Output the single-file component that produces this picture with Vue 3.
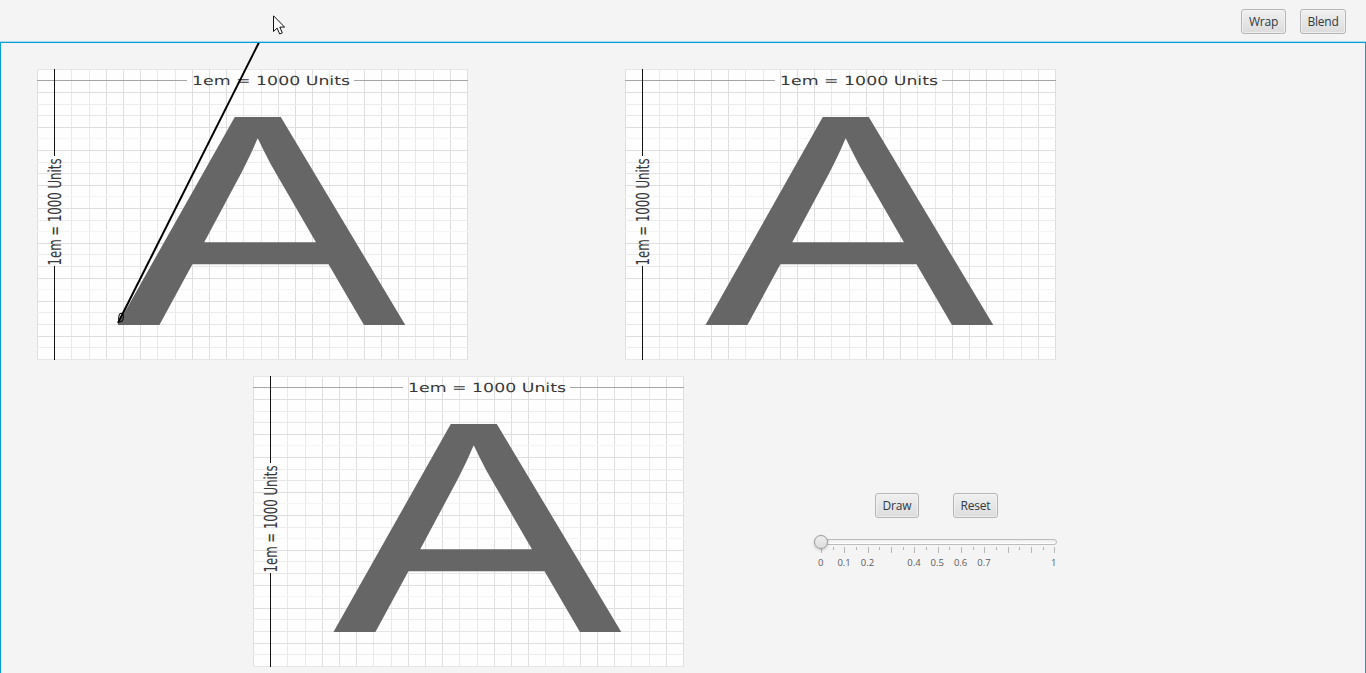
<script setup>
const cols = Array.from({ length: 26 }, (_, i) => i)
const inner = cols.filter(i => i !== 1)
const ticks = Array.from({ length: 21 }, (_, i) => i)
const labels = [0, 0.1, 0.2, 0.4, 0.5, 0.6, 0.7, 1]
const rows = [['a', 'b'], ['c']]
const weights = 'm-sfmswsfmswsfwsfmswsfmsfm'
const shades = { s: '#dedede', m: '#e6e6e6', f: '#ececec', w: '#f4f4f4' }
const vx = i => Math.round(i * 17.2)
const hy = i => Math.round(i * 11.6 - 0.2)
const vShade = i => (i % 5 === 2 || i % 5 === 3 ? '#e9e9e9' : '#dfdfdf')
const hShade = i => shades[weights[i]]
</script>

<template>
  <div class="window">
    <header class="toolbar">
      <button class="btn wrap">Wrap</button>
      <button class="btn blend">Blend</button>
    </header>
    <main class="stage">
      <div v-for="(row, r) in rows" :key="r" class="row" :class="'row' + r">
        <svg v-for="p in row" :key="p" class="sheet" width="431" height="291" viewBox="0 0 431 291">
          <rect width="431" height="291" fill="#fefefe" />
          <g shape-rendering="crispEdges">
            <rect v-for="i in inner" :key="'v' + i" :x="vx(i)" y="0" width="1" height="291" :fill="vShade(i)" />
            <rect v-for="i in inner" :key="'h' + i" x="0" :y="hy(i)" width="431" height="1" :fill="hShade(i)" />
            <rect x="0" y="11" width="150" height="1" fill="#a5a5a5" />
            <rect x="317" y="11" width="114" height="1" fill="#a5a5a5" />
            <rect x="17" y="0" width="1" height="87" fill="#111" />
            <rect x="17" y="197" width="1" height="94" fill="#111" />
          </g>
          <text class="unit" x="155" y="16" font-size="12.6" textLength="158" lengthAdjust="spacingAndGlyphs">1em = 1000 Units</text>
          <text class="unit" transform="translate(24 196.500) rotate(-90)" font-size="18" textLength="107" lengthAdjust="spacingAndGlyphs">1em = 1000 Units</text>
          <text class="letter" transform="matrix(1.447 0 .022 1.008 79.600 256)" font-size="300">A</text>
        </svg>
        <section v-if="r === 1" class="controls">
          <div class="actions">
            <button class="btn draw">Draw</button>
            <button class="btn reset">Reset</button>
          </div>
          <div class="slider">
            <div class="track"></div>
            <div class="thumb"></div>
            <svg class="scale" width="260" height="32" viewBox="0 0 260 32">
              <rect v-for="t in ticks" :key="t" :x="Math.round(11 + t * 11.67)" y="1" width="1" :height="t % 2 ? 3 : 6" fill="#b6b6b6" />
              <text v-for="l in labels" :key="l" :x="10.800 + l * 233" y="20" text-anchor="middle">{{ l }}</text>
            </svg>
          </div>
        </section>
      </div>
      <svg class="stroke" width="420" height="330" viewBox="0 43 420 330">
        <path d="M259.200 42L118 323" stroke="#000" stroke-width="2" fill="none" />
        <ellipse cx="121" cy="317.500" rx="2.300" ry="4.200" transform="rotate(8 121 317.500)" fill="none" stroke="#000" stroke-width="1" />
      </svg>
    </main>
    <svg class="cursor" width="14" height="21" viewBox="0 0 14 21">
      <path d="M.5 .8V16.500L4.100 13.100L6.700 19L9.300 17.900L6.800 12.100H11.600Z" fill="#fff" stroke="#111" stroke-width="1" />
    </svg>
  </div>
</template>

<style>
body { background: #f4f4f4; overflow: hidden; }
</style>
<style scoped>
.window { position: relative; height: 673px; overflow: hidden; background: #f4f4f4; display: flex; flex-direction: column; font-family: "Open Sans", "Noto Sans", sans-serif; }
.toolbar { flex: none; height: 42px; box-sizing: border-box; padding: 9px 20px 0 0; display: flex; justify-content: flex-end; gap: 14px; }
.btn { box-sizing: border-box; height: 25px; padding: 0; border: 1px solid #b5b5b5; border-radius: 3px; background: linear-gradient(#f0f0f0, #dcdcdc); box-shadow: inset 0 0 0 1px #f6f6f6aa; color: #2f3a44; font: 12px/23px "Open Sans", "Noto Sans", sans-serif; letter-spacing: -.2px; }
.wrap { width: 45px; }
.blend { width: 46px; }
.stage { position: relative; flex: 1; box-sizing: border-box; border: 1px solid #039ed3; border-bottom: 0; padding: 26px 0 0 36px; box-shadow: 0 -1px 0 #a9dcee; }
.row { display: flex; height: 291px; }
.row0 { gap: 157px; }
.row1 { margin: 16px 0 0 216px; }
.sheet { display: block; flex: none; }
.unit { font-family: "DejaVu Sans", sans-serif; fill: #383838; text-rendering: geometricPrecision; }
.letter { font-family: "Liberation Sans", sans-serif; fill: #666; text-rendering: geometricPrecision; }
.controls { margin: 117px 0 0 126px; width: 260px; }
.actions { display: flex; gap: 34px; padding-left: 65px; }
.draw { width: 44px; }
.reset { width: 45px; }
.slider { position: relative; padding-top: 21px; }
.track { box-sizing: border-box; height: 6px; margin: 0 13px 0 5px; border: 1px solid #bcbcbc; border-radius: 3px; background: linear-gradient(#eaeaea, #fff); }
.thumb { position: absolute; left: 4px; top: 17px; box-sizing: border-box; width: 14px; height: 14px; border: 1px solid #999; border-radius: 50%; background: linear-gradient(#eee, #dedede); box-shadow: 0 1px 3px #0003; }
.scale { display: block; margin-top: 1px; font-size: 9.500px; fill: #5c5c5c; }
.stroke { position: absolute; left: -1px; top: 0; }
.cursor { position: absolute; left: 273px; top: 15px; }
</style>
